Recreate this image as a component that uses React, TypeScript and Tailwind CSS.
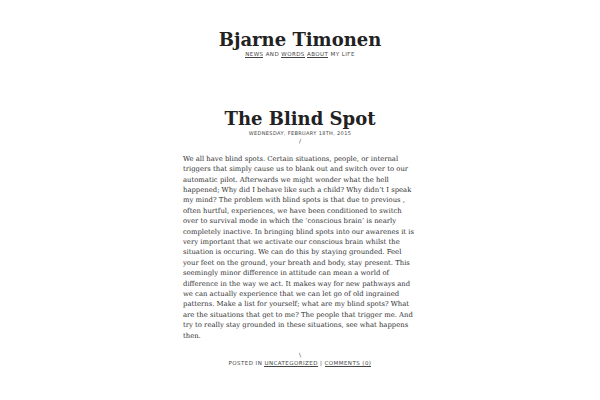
import React from 'react';

const serif = { fontFamily: '"DejaVu Serif", serif' };
const sans = { fontFamily: '"DejaVu Sans", sans-serif' };

const LINES = [
  'We all have blind spots. Certain situations, people, or internal',
  'triggers that simply cause us to blank out and switch over to our',
  'automatic pilot. Afterwards we might wonder what the hell',
  'happened; Why did I behave like such a child? Why didn\u2019t I speak',
  'my mind? The problem with blind spots is that due to previous ,',
  'often hurtful, experiences, we have been conditioned to switch',
  'over to survival mode in which the \u2018conscious brain\u2019 is nearly',
  'completely inactive. In bringing blind spots into our awarenes it is',
  'very important that we activate our conscious brain whilst the',
  'situation is occuring. We can do this by staying grounded. Feel',
  'your feet on the ground, your breath and body, stay present. This',
  'seemingly minor difference in attitude can mean a world of',
  'difference in the way we act. It makes way for new pathways and',
  'we can actually experience that we can let go of old ingrained',
  'patterns. Make a list for yourself; what are my blind spots? What',
  'are the situations that get to me? The people that trigger me. And',
  'try to really stay grounded in these situations, see what happens',
  'then.',
];

export default function App() {
  return (
    <div className="w-[600px] h-[400px] bg-white overflow-hidden text-[#222] flex flex-col items-center">
      <header className="mt-[30px] flex flex-col items-center">
        <h1 className="text-[18px] leading-[20px] font-bold text-[#222]" style={serif}>
          Bjarne Timonen
        </h1>
        <p className="text-[5.5px] leading-[8px] tracking-[0.08em] uppercase text-[#444]" style={sans}>
          <span className="border-b border-[#444]">News</span> and{' '}
          <span className="border-b border-[#444]">Words</span>{' '}
          <span className="border-b border-[#444]">About</span> my life
        </p>
      </header>

      <article className="mt-[51px] w-[234px] flex flex-col items-center">
        <h2 className="text-[18px] leading-[20px] font-bold text-[#222]" style={serif}>
          The Blind Spot
        </h2>
        <p className="text-[5px] leading-[8px] tracking-[0.07em] uppercase text-[#444]" style={sans}>
          Wednesday, February 18th, 2015
        </p>
        <p className="text-[6px] leading-[8px] text-[#444]" style={sans}>/</p>
        <div className="mt-[8.8px] self-stretch text-[6.85px] leading-[10.4px] text-[#333]" style={serif}>
          {LINES.map((l, i) => (
            <div key={i} className="whitespace-nowrap">{l}</div>
          ))}
        </div>
        <p className="mt-[10px] text-[6px] leading-[8px] text-[#444]" style={sans}>\</p>
        <p className="text-[5.5px] leading-[8px] tracking-[0.08em] uppercase text-[#444]" style={sans}>
          Posted in <span className="border-b border-[#444]">Uncategorized</span> |{' '}
          <span className="border-b border-[#444]">Comments (0)</span>
        </p>
      </article>
    </div>
  );
}
